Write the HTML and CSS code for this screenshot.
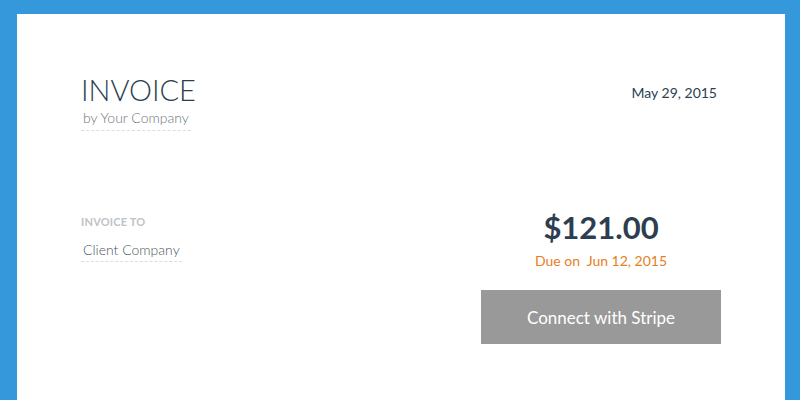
FILE: index.html
```html
<!DOCTYPE html>
<html lang="en">
<head>
  <meta charset="UTF-8" />
  <title>Invoice</title>
  <link rel="stylesheet" href="styles.css">
</head>
<body>
  <div class="invoice">
    <div class="top-row">
      <div class="brand">
        <h1>INVOICE</h1>
        <div class="editable company">by Your Company</div>
      </div>
      <div class="date">May 29, 2015</div>
    </div>
    <div class="bottom-row">
      <div class="client">
        <div class="label">INVOICE TO</div>
        <div class="editable client-name">Client Company</div>
      </div>
      <div class="payment">
        <div class="amount">$121.00</div>
        <div class="due">Due on&nbsp; Jun 12, 2015</div>
        <button class="stripe-btn">Connect with Stripe</button>
      </div>
    </div>
  </div>
</body>
</html>
```

FILE: styles.css
```css
html, body {
  height: 100%;
}
body {
  margin: 0;
  padding: 14px 15px 0 17px;
  box-sizing: border-box;
  background: #3498db;
  font-family: 'Lato', sans-serif;
  color: #2c3e50;
}
.invoice {
  background: #fff;
  height: 100%;
  box-sizing: border-box;
  padding: 59px 64px 0 64px;
}
.top-row {
  display: flex;
  justify-content: space-between;
  align-items: flex-start;
}
.brand h1 {
  margin: 0;
  font-size: 29px;
  font-weight: 300;
  letter-spacing: 0;
  line-height: 34px;
}
.editable {
  display: inline-block;
  border-bottom: 1px dashed #ddd;
  font-size: 14px;
  font-weight: 300;
  color: #6f767c;
  padding: 0 2px 4px 2px;
}
.company {
  margin-top: -3px;
}
.date {
  font-size: 14px;
  margin-top: 11px;
  margin-right: 4px;
}
.bottom-row {
  display: flex;
  justify-content: space-between;
  margin-top: 80px;
}
.client {
  padding-top: 4px;
}
.label {
  font-size: 11px;
  font-weight: bold;
  color: #bdc3c7;
  letter-spacing: 0.2px;
  margin-bottom: 11px;
}
.client-name {
  color: #4a5560;
  padding-bottom: 3px;
}
.payment {
  display: flex;
  flex-direction: column;
  align-items: center;
  width: 240px;
}
.amount {
  font-size: 31px;
  font-weight: bold;
  line-height: 38px;
  margin-top: -3px;
}
.due {
  font-size: 14px;
  color: #e67e22;
  margin-top: 6px;
}
.stripe-btn {
  margin-top: 21px;
  width: 240px;
  height: 54px;
  border: none;
  background: #999;
  color: #fff;
  font-family: 'Lato', sans-serif;
  font-size: 17px;
}
```
